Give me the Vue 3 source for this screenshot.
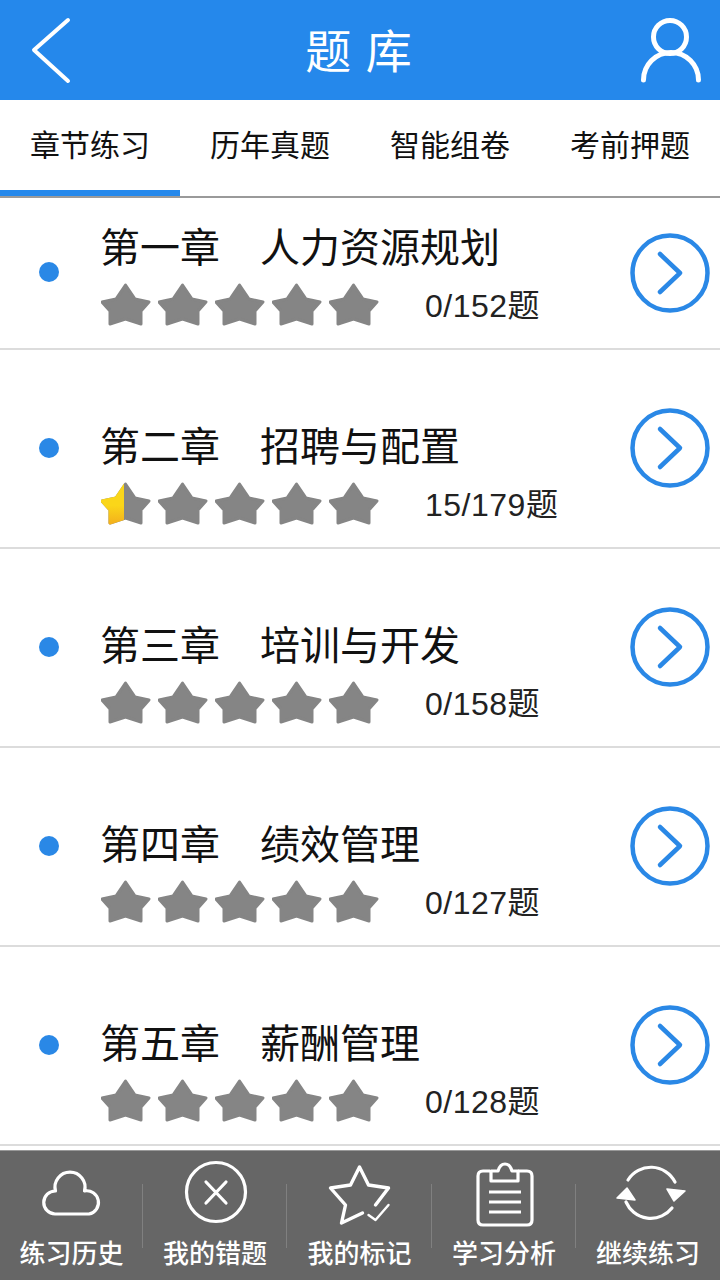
<template>
  <div class="page">
    <header class="top">
      <svg class="back" width="80" height="100" viewBox="0 0 80 100">
        <path d="M68 20 L34 50 L68 81" fill="none" stroke="#fff" stroke-width="4" stroke-linecap="round" stroke-linejoin="round" />
      </svg>
      <h1>题 库</h1>
      <svg class="user" width="62" height="100" viewBox="0 0 62 100">
        <circle cx="30" cy="37" r="16.5" fill="none" stroke="#fff" stroke-width="5" />
        <path d="M3.5 80 A27.5 27.5 0 0 1 58.5 80" fill="none" stroke="#fff" stroke-width="5" stroke-linecap="round" />
      </svg>
    </header>

    <nav class="tabs">
      <div v-for="(t, i) in tabs" :key="t" :class="['tab', { on: i === 0 }]">{{ t }}</div>
    </nav>

    <section class="list">
      <div v-for="(c, i) in chapters" :key="c.name" :class="['row', { first: i === 0 }]">
        <span class="dot"></span>
        <div class="body">
          <div class="title">{{ c.name }}<span class="gap"></span>{{ c.sub }}</div>
          <div class="meta">
            <div class="stars">
              <svg v-for="n in 5" :key="n" width="50" height="50" viewBox="0 0 50 50">
                <defs v-if="c.half && n === 1">
                  <linearGradient id="gold" x1="0" y1="0" x2="0" y2="1">
                    <stop offset="0.55" stop-color="#fad619" />
                    <stop offset="1" stop-color="#f4b21c" />
                  </linearGradient>
                  <clipPath id="half"><rect x="0" y="0" width="23" height="50" /></clipPath>
                </defs>
                <path :d="star" fill="#858585" stroke="#858585" stroke-width="3" stroke-linejoin="round" />
                <path v-if="c.half && n === 1" :d="star" fill="url(#gold)" stroke="url(#gold)" stroke-width="3" stroke-linejoin="round" clip-path="url(#half)" />
              </svg>
            </div>
            <span class="count">{{ c.count }}题</span>
          </div>
        </div>
        <svg class="go" width="80" height="80" viewBox="0 0 80 80">
          <circle cx="40" cy="40" r="37.5" fill="none" stroke="#2a88e6" stroke-width="4.5" />
          <path d="M30 21 L50 40 L30 59" fill="none" stroke="#2a88e6" stroke-width="4.5" stroke-linecap="round" stroke-linejoin="round" />
        </svg>
      </div>
    </section>

    <footer class="foot">
      <div class="item">
        <svg width="80" height="68" viewBox="0 0 80 68">
          <path d="M23 54 A11.5 11.5 0 0 1 23.5 31 A15 15 0 1 1 52.5 31 A11.5 11.5 0 0 1 57 54 Z" fill="none" stroke="#fff" stroke-width="3.2" stroke-linejoin="round" />
        </svg>
        <span>练习历史</span>
      </div>
      <div class="item">
        <svg width="80" height="68" viewBox="0 0 80 68">
          <circle cx="41" cy="32" r="29.5" fill="none" stroke="#fff" stroke-width="3.2" />
          <path d="M31 22 L51 43 M51 22 L31 43" fill="none" stroke="#fff" stroke-width="3.2" stroke-linecap="round" />
        </svg>
        <span>我的错题</span>
      </div>
      <div class="item">
        <svg width="80" height="68" viewBox="0 0 80 68">
          <path d="M42.5 53 L21.5 63 L25.5 45 L10.5 28 L30.5 25 L39.5 7 L48.5 25 L68.5 28 L55.5 45" fill="none" stroke="#fff" stroke-width="3.4" stroke-linejoin="round" stroke-linecap="round" />
          <path d="M48.5 55 L55.5 60 L68.5 45" fill="none" stroke="#fff" stroke-width="2.4" stroke-linecap="round" stroke-linejoin="round" />
        </svg>
        <span>我的标记</span>
      </div>
      <div class="item">
        <svg width="80" height="68" viewBox="0 0 80 68">
          <path d="M26 11 H19 Q14 11 14 16 V60 Q14 65 19 65 H63 Q68 65 68 60 V16 Q68 11 63 11 H54" fill="none" stroke="#fff" stroke-width="3.2" />
          <path d="M27 21 V11 H34 Q36 4 41 4 Q46 4 48 11 H54 V21 Z" fill="none" stroke="#fff" stroke-width="3.2" stroke-linejoin="round" />
          <path d="M25 32 H57 M25 42 H57 M25 52 H57" fill="none" stroke="#fff" stroke-width="3.2" />
        </svg>
        <span>学习分析</span>
      </div>
      <div class="item">
        <svg width="80" height="68" viewBox="0 0 80 68">
          <path d="M20 20 A27 27 0 0 1 67 22 M64 48 A27 27 0 0 1 18 42" fill="none" stroke="#fff" stroke-width="3.2" stroke-linecap="round" />
          <path d="M59 29 L77 31 L66 41 Z M19 28 L9 38 L27 40 Z" fill="#fff" stroke="#fff" stroke-width="1.5" stroke-linejoin="round" />
        </svg>
        <span>继续练习</span>
      </div>
    </footer>
  </div>
</template>

<script setup>
const tabs = ['章节练习', '历年真题', '智能组卷', '考前押题']

const chapters = [
  { name: '第一章', sub: '人力资源规划', count: '0/152' },
  { name: '第二章', sub: '招聘与配置', count: '15/179', half: true },
  { name: '第三章', sub: '培训与开发', count: '0/158' },
  { name: '第四章', sub: '绩效管理', count: '0/127' },
  { name: '第五章', sub: '薪酬管理', count: '0/128' },
]

const star = 'M24.5 4 L34 18 L48 21 L40 30 L40 43 L24.5 38 L9 43 L9 30 L1 21 L15 18 Z'
</script>

<style>
html, body { margin: 0; background: #fff; }
</style>

<style scoped>
.page {
  width: 720px;
  height: 1280px;
  display: flex;
  flex-direction: column;
  overflow: hidden;
  background: #fff;
  font-family: "Liberation Sans", "Noto Sans CJK SC", sans-serif;
  color: #111;
}
.top {
  height: 100px;
  flex: none;
  background: #2588eb;
  display: grid;
  grid-template-columns: 80px 1fr 62px 18px;
  color: #fff;
}
.back, .user { display: block; }
.top h1 {
  margin: 0 0 0 -3px;
  text-align: center;
  font-size: 46px;
  font-weight: 400;
  line-height: 96px;
  word-spacing: 4px;
  font-family: "Noto Sans CJK SC", sans-serif;
}
.tabs {
  height: 98px;
  flex: none;
  display: grid;
  grid-template-columns: repeat(4, 180px);
  box-sizing: border-box;
  border-bottom: 2px solid #9a9a9a;
}
.tab {
  height: 96px;
  box-sizing: border-box;
  text-align: center;
  font-size: 30px;
  line-height: 87px;
  font-family: "Noto Sans CJK SC", sans-serif;
}
.tab.on { border-bottom: 6px solid #2588eb; }
.row {
  height: 199px;
  box-sizing: border-box;
  display: flex;
  align-items: center;
  padding: 0 10px 0 39px;
  border-bottom: 2px solid #dcdcdc;
}
.row.first { height: 152px; }
.dot {
  width: 20px;
  height: 20px;
  flex: none;
  border-radius: 50%;
  background: #2a88e6;
  margin-bottom: 2px;
}
.body {
  align-self: flex-end;
  margin: 0 0 17px 42px;
  flex: 1;
  height: 108px;
}
.title {
  height: 58px;
  margin-left: -1px;
  font-size: 40px;
  line-height: 44px;
  font-family: "Noto Sans CJK SC", sans-serif;
  white-space: nowrap;
}
.gap { display: inline-block; width: 40px; }
.meta {
  display: flex;
  align-items: center;
  height: 50px;
}
.stars { display: flex; gap: 7px; width: 324px; }
.stars svg { display: block; }
.count {
  padding-bottom: 6px;
  font-size: 32px;
  letter-spacing: 0.5px;
  color: #222;
  white-space: nowrap;
}
.go { flex: none; display: block; margin-bottom: 2px; }
.row.first .go { margin-bottom: 0; }
.foot {
  margin-top: auto;
  height: 130px;
  flex: none;
  box-sizing: border-box;
  background: #666;
  border-top: 1px solid #999;
  display: grid;
  grid-template-columns: 143px 144px 145px 144px 144px;
  padding-top: 9px;
}
.item {
  position: relative;
  display: flex;
  flex-direction: column;
  align-items: center;
}
.item svg { display: block; overflow: visible; }
.item span {
  margin-top: 6px;
  font-size: 26px;
  line-height: 36px;
  font-weight: 500;
  color: #fff;
  white-space: nowrap;
  font-family: "Noto Sans CJK SC", sans-serif;
}
.item:not(:last-child)::after {
  content: "";
  position: absolute;
  right: 0;
  top: 24px;
  height: 64px;
  width: 1px;
  background: #808080;
}
</style>
